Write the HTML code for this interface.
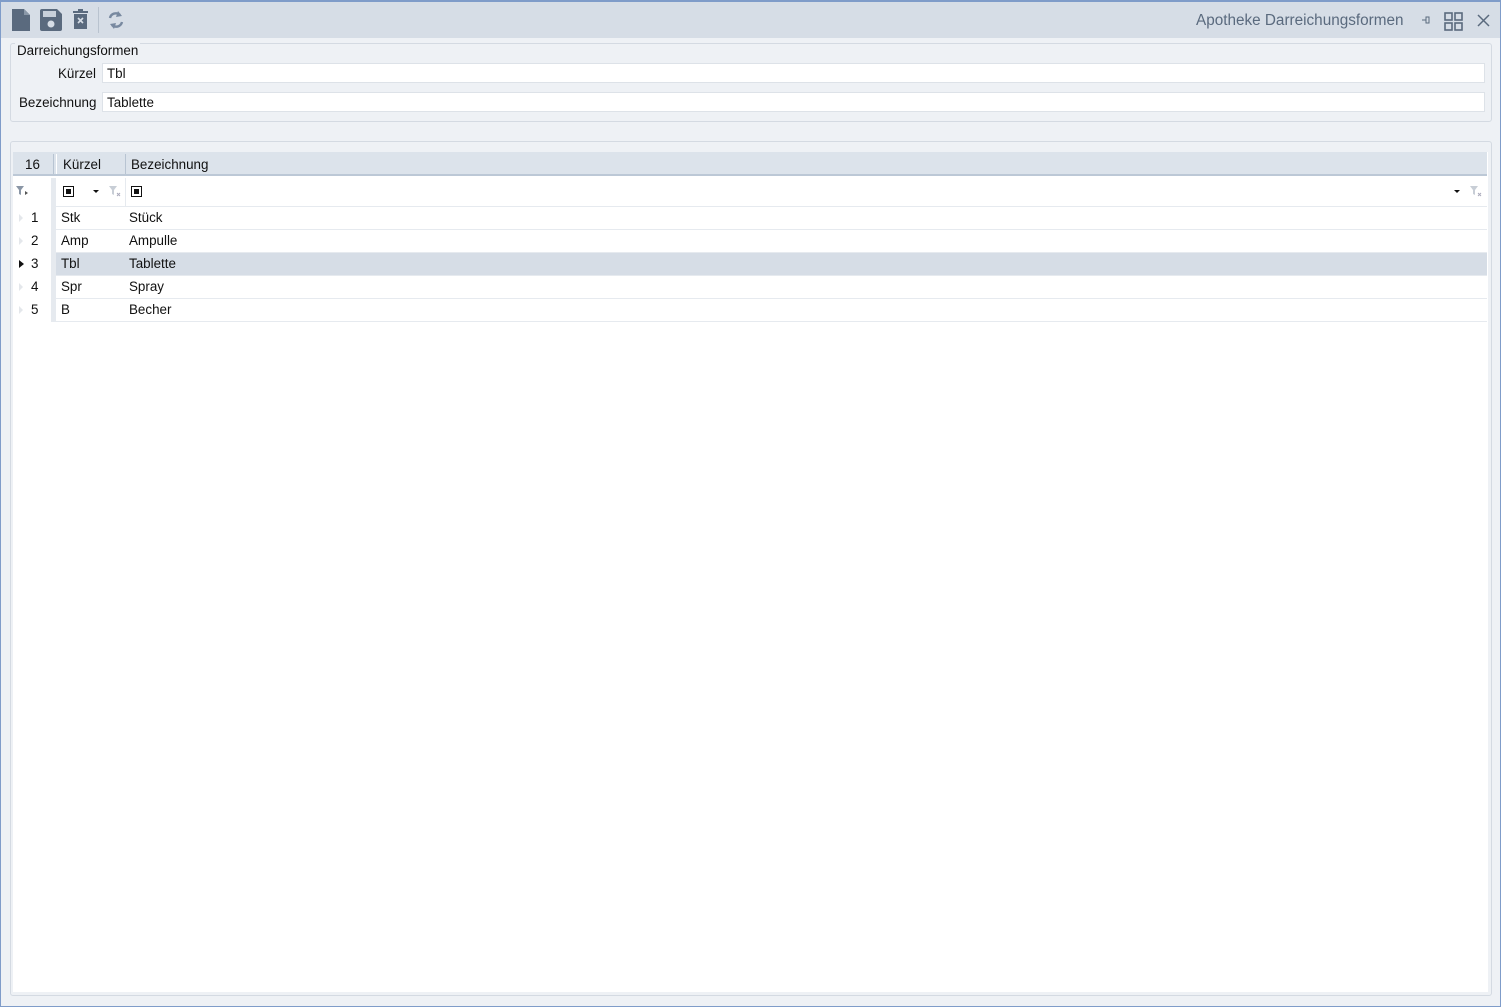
<!DOCTYPE html>
<html><head><meta charset="utf-8"><style>
*{box-sizing:border-box;margin:0;padding:0}
body{width:1501px;height:1007px;background:#eef1f5;font-family:"Liberation Sans","DejaVu Sans",sans-serif;font-size:13.4px;color:#111;position:relative;overflow:hidden}
.frame{position:absolute;left:0;top:0;width:1501px;height:1007px;border:1px solid #7f9cc9;border-top:2px solid #7f9cc9}
.tb{position:absolute;left:1px;top:2px;width:1499px;height:36px;background:#d6dde6}
.abs{position:absolute}
.grp{position:absolute;left:10px;top:43px;width:1482px;height:79px;border:1px solid #d4dae2;border-radius:3px;background:#eef1f5}
.lbl{position:absolute;font-size:13.4px}
.inp{position:absolute;left:102px;width:1383px;height:20px;background:#fff;border:1px solid #dde2e8;padding:2px 4px;font-size:13.4px}
.gridp{position:absolute;left:10px;top:141px;width:1482px;height:855px;border:1px solid #d4dae2;border-radius:3px;background:#eef1f5}
.gw{position:absolute;left:13px;top:152px;width:1475px;height:840px;background:#fff}
.row{position:absolute;left:45px;width:1430px;height:23px;border-bottom:1px solid #e6eaef}
.cell{position:absolute;top:3px}
</style></head><body>
<div class="frame"></div>
<div class="tb"></div>
<svg class="abs" style="left:10px;top:8px" width="24" height="24" viewBox="0 0 24 24"><path d="M2 1h12l6 6v16H2z" fill="#5a6a7e"/><path d="M14 1v6h6" fill="#8a98a8"/></svg>
<svg class="abs" style="left:39px;top:8px" width="24" height="24" viewBox="0 0 24 24"><path d="M1 3a2 2 0 0 1 2-2h15l5 5v15a2 2 0 0 1-2 2H3a2 2 0 0 1-2-2z" fill="#5a6a7e"/><rect x="4" y="3" width="13" height="6" fill="#c8d0da"/><circle cx="12" cy="16" r="3.5" fill="#d6dde6"/></svg>
<svg class="abs" style="left:72px;top:8px" width="18" height="24" viewBox="0 0 18 24"><rect x="1" y="3" width="15" height="2" fill="#5a6a7e"/><rect x="6" y="1" width="5" height="2" fill="#5a6a7e"/><rect x="2" y="6" width="13" height="15" fill="#5a6a7e"/><path d="M6 10l5 5M11 10l-5 5" stroke="#d6dde6" stroke-width="1.6"/></svg>
<div class="abs" style="left:98px;top:7px;width:1px;height:26px;background:#b9c3cf"></div>
<svg class="abs" style="left:106px;top:9px" width="20" height="22" viewBox="0 0 20 22"><path d="M4 9a6 6 0 0 1 10-3M16 13a6 6 0 0 1-10 3" fill="none" stroke="#7889a0" stroke-width="2.4"/><path d="M12 2l4 5-6 1zM8 20l-4-5 6-1z" fill="#7889a0"/></svg>
<div class="abs" style="left:1196px;top:12px;font-size:15.3px;color:#5a6a7e">Apotheke Darreichungsformen</div>
<svg class="abs" style="left:1421px;top:15px" width="10" height="10" viewBox="0 0 10 10"><path d="M1 5h4M5 2v6h3V2z" fill="none" stroke="#5a6a7e" stroke-width="1"/></svg>
<svg class="abs" style="left:1444px;top:12px" width="19" height="19" viewBox="0 0 19 19"><g fill="none" stroke="#5a6a7e" stroke-width="1.6"><rect x="1" y="1" width="7" height="7"/><rect x="11" y="1" width="7" height="7"/><rect x="1" y="11" width="7" height="7"/><rect x="11" y="11" width="7" height="7"/></g></svg>
<svg class="abs" style="left:1477px;top:14px" width="13" height="13" viewBox="0 0 13 13"><path d="M1 1l11 11M12 1L1 12" stroke="#5a6a7e" stroke-width="1.5"/></svg>

<div class="grp"></div>
<div class="abs" style="left:15px;top:43px;background:#eef1f5;padding:0 2px">Darreichungsformen</div>
<div class="lbl" style="left:58px;top:66px">Kürzel</div>
<div class="inp" style="top:63px">Tbl</div>
<div class="lbl" style="left:19px;top:95px">Bezeichnung</div>
<div class="inp" style="top:92px">Tablette</div>

<div class="gridp"></div>
<div class="gw"></div>
<div class="abs" style="left:13px;top:152px;width:1474px;height:24px;background:#dce3eb;border-bottom:2px solid #bcc8d6"></div>
<div class="abs" style="left:53px;top:154px;width:1px;height:20px;background:#b8c4d2"></div>
<div class="abs" style="left:56px;top:154px;width:1px;height:20px;background:#fff"></div>
<div class="abs" style="left:125px;top:154px;width:1px;height:20px;background:#b8c4d2"></div>
<div class="abs" style="left:25px;top:157px">16</div>
<div class="abs" style="left:63px;top:157px">Kürzel</div>
<div class="abs" style="left:131px;top:157px">Bezeichnung</div>
<div class="abs" style="left:51px;top:178px;width:5px;height:144px;background:#e6eaef"></div>
<div class="abs" style="left:56px;top:178px;width:1431px;height:29px;border-bottom:1px solid #e6eaef"></div>
<div class="abs" style="left:125px;top:178px;width:1px;height:28px;background:#e6eaef"></div>
<svg class="abs" style="left:16px;top:186px" width="12" height="10" viewBox="0 0 12 10"><path d="M0 0h8L5 4v5L3 8V4z" fill="#8a96a6"/><path d="M9 5l3 2-3 2z" fill="#555"/></svg>
<div class="abs" style="left:63px;top:186px;width:11px;height:11px;border:1.5px solid #111"><div style="margin:1.5px;width:5px;height:5px;background:#111"></div></div>
<div class="abs" style="left:93px;top:190px;border:3px solid transparent;border-top:3px solid #111"></div>
<svg class="abs" style="left:109px;top:186px" width="12" height="11" viewBox="0 0 12 11"><path d="M0 0h8L5 4v5L3 8V4z" fill="#c8ced6"/><path d="M8 7l3 3M11 7l-3 3" stroke="#aab" stroke-width="1"/></svg>
<div class="abs" style="left:131px;top:186px;width:11px;height:11px;border:1.5px solid #111"><div style="margin:1.5px;width:5px;height:5px;background:#111"></div></div>
<div class="abs" style="left:1454px;top:190px;border:3px solid transparent;border-top:3px solid #111"></div>
<svg class="abs" style="left:1470px;top:186px" width="12" height="11" viewBox="0 0 12 11"><path d="M0 0h8L5 4v5L3 8V4z" fill="#c8ced6"/><path d="M8 7l3 3M11 7l-3 3" stroke="#aab" stroke-width="1"/></svg>
<div class="row" style="top:207px;left:56px;width:1431px"><span class="cell" style="left:5px">Stk</span><span class="cell" style="left:73px">Stück</span></div>
<div class="row" style="top:230px;left:56px;width:1431px"><span class="cell" style="left:5px">Amp</span><span class="cell" style="left:73px">Ampulle</span></div>
<div class="row" style="top:253px;left:56px;width:1431px;background:#d6dde6"><span class="cell" style="left:5px">Tbl</span><span class="cell" style="left:73px">Tablette</span></div>
<div class="row" style="top:276px;left:56px;width:1431px"><span class="cell" style="left:5px">Spr</span><span class="cell" style="left:73px">Spray</span></div>
<div class="row" style="top:299px;left:56px;width:1431px"><span class="cell" style="left:5px">B</span><span class="cell" style="left:73px">Becher</span></div>
<div class="abs" style="left:31px;top:210px">1</div>
<div class="abs" style="left:31px;top:233px">2</div>
<div class="abs" style="left:31px;top:256px">3</div>
<div class="abs" style="left:31px;top:279px">4</div>
<div class="abs" style="left:31px;top:302px">5</div>
<div class="abs" style="left:19px;top:214px;border:4px solid transparent;border-left:4px solid #e4e7eb"></div>
<div class="abs" style="left:19px;top:237px;border:4px solid transparent;border-left:4px solid #e4e7eb"></div>
<div class="abs" style="left:19px;top:260px;border:4px solid transparent;border-left:5px solid #111"></div>
<div class="abs" style="left:19px;top:283px;border:4px solid transparent;border-left:4px solid #e4e7eb"></div>
<div class="abs" style="left:19px;top:306px;border:4px solid transparent;border-left:4px solid #e4e7eb"></div>
</body></html>
